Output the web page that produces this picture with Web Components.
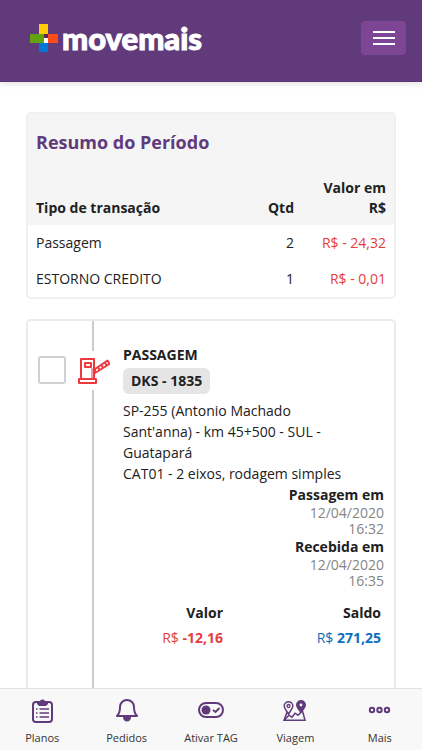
<!DOCTYPE html>
<html lang="pt-BR">
<head>
<meta charset="utf-8">
<meta name="viewport" content="width=device-width, initial-scale=1">
<title>Movemais</title>
<style>
body { margin: 0; background: #fff; color: #212121; font: 14px/22px "Open Sans", "Noto Sans", sans-serif; }
</style>
</head>
<body>
<mm-app>
  <mm-header slot="header"></mm-header>
  <mm-summary></mm-summary>
  <mm-transaction>
    <span slot="kind">PASSAGEM</span>
    <span slot="plate">DKS - 1835</span>
    <span slot="place">SP-255 (Antonio Machado Sant'anna) - km 45+500 - SUL - Guatapará</span>
    <span slot="category">CAT01 - 2 eixos, rodagem simples</span>
    <span slot="passed">12/04/2020 16:32</span>
    <span slot="received">12/04/2020 16:35</span>
    <span slot="value">-12,16</span>
    <span slot="balance">271,25</span>
  </mm-transaction>
  <mm-nav slot="nav">
    <mm-nav-item icon="plans">Planos</mm-nav-item>
    <mm-nav-item icon="bell">Pedidos</mm-nav-item>
    <mm-nav-item icon="toggle">Ativar TAG</mm-nav-item>
    <mm-nav-item icon="trip">Viagem</mm-nav-item>
    <mm-nav-item icon="more">Mais</mm-nav-item>
  </mm-nav>
</mm-app>
<script>
const define = (name, markup) => customElements.define(name, class extends HTMLElement {
  constructor() {
    super();
    this.attachShadow({ mode: 'open' }).innerHTML = markup;
  }
});

define('mm-app', `
<style>
:host { display: flex; flex-direction: column; height: 100vh; }
main { flex: 1; min-height: 0; overflow: hidden; display: flex; flex-direction: column; gap: 20px; padding: 30px 26px 0; }
::slotted(mm-summary) { flex: none; }
::slotted(mm-transaction) { flex: 1 0 auto; }
</style>
<slot name="header"></slot>
<main><slot></slot></main>
<slot name="nav"></slot>`);

define('mm-header', `
<style>
:host { display: block; flex: none; position: relative; }
header { display: flex; justify-content: space-between; align-items: center; background: #613a7c; padding: 21px 16px 26px 30px; border-bottom: 1px solid #593573; box-shadow: 0 2px 6px rgba(0,0,0,.12); }
.logo { display: flex; align-items: center; gap: 4px; color: #fff; text-decoration: none; font: 900 31px/32px Lato, sans-serif; -webkit-text-stroke: 1px #fff; }
.logo svg { flex: none; }
button { display: grid; place-items: center; width: 45px; height: 34px; padding: 0; border: 0; border-radius: 4px; background: #7c4695; }
svg { display: block; }
</style>
<header>
  <a class="logo" href="#" aria-label="movemais">
    <svg width="28" height="28" viewBox="0 0 28 28" aria-hidden="true">
      <path fill="#ffcb05" d="M9 0h9v10H9z"/><path fill="#62a30f" d="M0 10h14v9H0z"/>
      <path fill="#ff4b17" d="M18 10h10v9H18z"/><path fill="#0076d6" d="M9 19h9v9H9z"/>
      <path fill="#fff" d="M14 14h4v5h-4z"/><path fill="#5c2553" d="M14 10h4v4h-4z"/>
    </svg>
    <span>movemais</span>
  </a>
  <button type="button" aria-label="Menu">
    <svg width="22" height="16" viewBox="0 0 22 16" fill="#fff"><path d="M0 1h22v2H0zM0 7h22v2H0zM0 13h22v2H0z"/></svg>
  </button>
</header>`);

define('mm-summary', `
<style>
:host { display: block; border: 2px solid #f0f0f0; border-radius: 5px; }
h2 { margin: 0; color: #613a7c; font-size: 18px; line-height: 24px; font-weight: 700; }
table { width: 100%; border-collapse: collapse; }
caption { text-align: left; background: #f5f5f5; padding: 16px 8px 24px; }
thead { background: #f5f5f5; }
th { font-weight: 700; line-height: 20px; vertical-align: bottom; padding: 0 8px 7px; text-align: left; }
td { padding: 7px 8px; }
.n { text-align: right; }
.qty { width: 64px; }
.val { width: 76px; }
.neg { color: #e53e3e; }
</style>
<table>
  <caption><h2>Resumo do Período</h2></caption>
  <thead><tr><th>Tipo de transação</th><th class="n qty">Qtd</th><th class="n val">Valor em R$</th></tr></thead>
  <tbody>
    <tr><td>Passagem</td><td class="n">2</td><td class="n neg">R$ - 24,32</td></tr>
    <tr><td>ESTORNO CREDITO</td><td class="n">1</td><td class="n neg">R$ - 0,01</td></tr>
  </tbody>
</table>`);

define('mm-transaction', `
<style>
:host { display: grid; grid-template-columns: 38px 54px 1fr; border: 2px solid #ebebeb; border-bottom: 0; border-radius: 5px 5px 0 0; }
.check { padding: 35px 0 0 10px; }
input { appearance: none; display: block; box-sizing: border-box; width: 28px; height: 28px; margin: 0; border: 2px solid #d0d0d0; border-radius: 3px; background: #fff; }
.line { display: flex; flex-direction: column; align-items: center; }
.line::before, .line::after { content: ""; width: 2px; background: #ccc; }
.line::before { height: 30px; }
.line::after { flex: 1; }
.line svg { flex: none; margin: 4px 0; }
.body { padding: 23px 10px 48px 3px; }
h3 { margin: 0 0 2px; font-size: 14px; line-height: 22px; }
.plate { display: inline-block; background: #e5e5e5; border-radius: 6px; padding: 2px 8px; font-weight: 700; }
p { margin: 0; padding-right: 24px; line-height: 21px; }
.where { margin-top: 6px; }
dl, dd, dt { margin: 0; }
dt { font-weight: 700; }
.dates { width: 104px; margin: 1px 0 0 auto; text-align: right; line-height: 16px; }
.dates dt { line-height: 20px; }
.dates dd { color: #858585; }
.totals { display: flex; justify-content: space-between; text-align: right; padding: 11px 3px 0 0; line-height: 25px; }
.totals div { width: 100px; }
.neg { color: #e53e3e; } .pos { color: #0c6ebd; }
</style>
<div class="check"><input type="checkbox" aria-label="Selecionar transação"></div>
<div class="line">
  <svg width="34" height="31" viewBox="0 0 34 31" fill="none" stroke="#ee3a3f" stroke-width="2" stroke-linejoin="round" aria-hidden="true">
    <path d="M5 24V4h13v20M3 24h17v4H3zM9 8h6v4H9z"/>
    <path stroke-width="1" d="M16 13v11"/>
    <path d="M19 14 31.500 5.500l2 3.500L19 18z"/>
    <path d="m22 12 1.500 3M25.500 10l1.500 3M29 7.500l1.500 3"/>
  </svg>
</div>
<div class="body">
  <h3><slot name="kind"></slot></h3>
  <span class="plate"><slot name="plate"></slot></span>
  <p class="where"><slot name="place"></slot></p>
  <p><slot name="category"></slot></p>
  <dl class="dates">
    <dt>Passagem em</dt><dd><slot name="passed"></slot></dd>
    <dt>Recebida em</dt><dd><slot name="received"></slot></dd>
  </dl>
  <dl class="totals">
    <div><dt>Valor</dt><dd class="neg">R$ <b><slot name="value"></slot></b></dd></div>
    <div><dt>Saldo</dt><dd class="pos">R$ <b><slot name="balance"></slot></b></dd></div>
  </dl>
</div>`);

define('mm-nav', `
<style>
:host { display: block; flex: none; position: relative; }
nav { display: flex; background: #f8f8f8; border-top: 1px solid #e2e2e2; }
::slotted(*) { flex: 1; }
</style>
<nav><slot></slot></nav>`);

const icons = {
  plans: '<rect x="4" y="5" width="19" height="20" rx="3"/><path fill="#613a7c" stroke="none" d="M8 4h3c1-2 4-2 5 0h3v3l-2 2h-7L8 7z"/><path stroke-width="1.500" d="M10.500 12H20M10.500 16H20M10.500 20H20M7 12h1.500M7 16h1.500M7 20h1.500"/>',
  bell: '<path stroke-linejoin="round" d="M3 19c2-2 3-4 3-9 0-4 3-7 7-7s7 3 7 7c0 5 1 7 3 9z"/><path fill="#613a7c" stroke="none" d="M9 20h8c0 3-2 4.500-4 4.500S9 23 9 20z"/>',
  toggle: '<rect x="1" y="6" width="24" height="14" rx="7"/><circle cx="8" cy="13" r="4.500" fill="#613a7c" stroke="none"/><path d="m15 13 2.500 2 4-4"/>',
  trip: '<path stroke-width="1.500" d="M5.500 14 2 23.200h21L20.500 14M2 23.200l5-5 3 2 3-4 3 2 3-3"/><path stroke-width="1.500" fill="#f8f8f8" d="M6.500 17C4 13 2.200 11.500 2.200 9a4.300 4.300 0 0 1 8.600 0c0 2.500-1.800 4-4.300 8z"/><circle cx="6.500" cy="9" r="1.500" stroke-width="1.300"/><path fill="#613a7c" stroke="none" d="M19 17c-2-4-5-6-5-9a5 5 0 0 1 10 0c0 3-3 5-5 9z"/><circle cx="19" cy="8" r="1.400" fill="#f8f8f8" stroke="none"/>',
  more: '<circle cx="5" cy="13" r="2.200"/><circle cx="12.500" cy="13" r="2.200"/><circle cx="20" cy="13" r="2.200"/>'
};
customElements.define('mm-nav-item', class extends HTMLElement {
  constructor() {
    super();
    this.attachShadow({ mode: 'open' }).innerHTML = `
<style>
:host { display: block; }
a { display: flex; flex-direction: column; align-items: center; gap: 6px; padding: 8px 0 3px; color: #333; text-decoration: none; font-size: 11px; line-height: 18px; }
svg { display: block; }
</style>
<a href="#">
  <svg width="26" height="26" viewBox="0 0 26 26" fill="none" stroke="#613a7c" stroke-width="2" aria-hidden="true">${icons[this.getAttribute('icon')]}</svg>
  <span><slot></slot></span>
</a>`;
  }
});
</script>
</body>
</html>
